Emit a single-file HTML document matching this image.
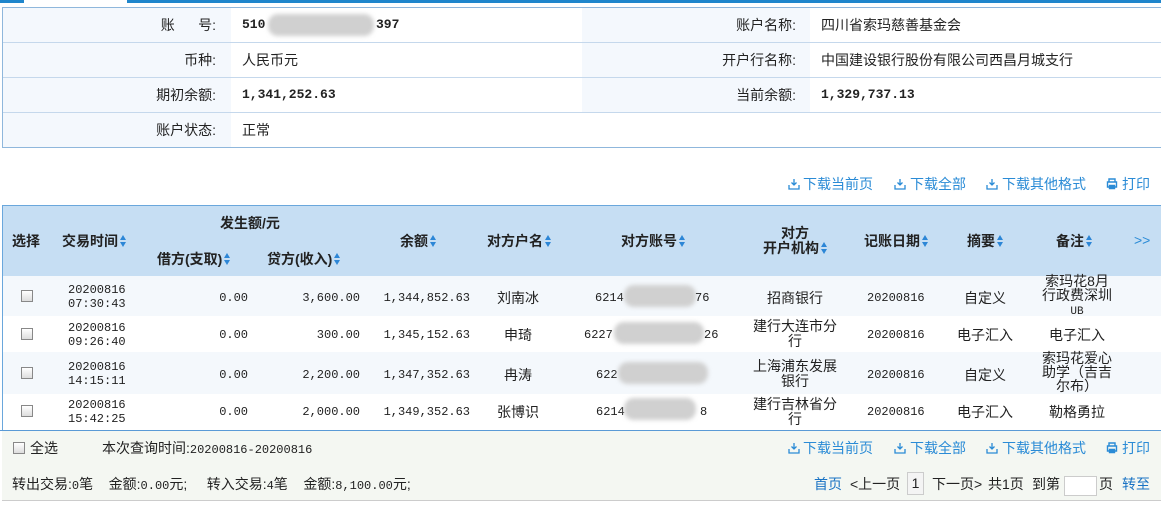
<!DOCTYPE html>
<html><head><meta charset="utf-8"><style>
*{margin:0;padding:0;box-sizing:border-box}
body{width:1161px;height:505px;background:#fff;font-family:"Liberation Sans","Noto Sans CJK SC",sans-serif;font-size:14px;color:#222;position:relative;overflow:hidden}
.a{position:absolute;white-space:nowrap;line-height:16px}
.m{font-family:"Liberation Mono","Noto Sans CJK SC",monospace;font-size:12px}
.b{font-weight:bold}
.blue{color:#1a73c4}
.lb{color:#2a8bd6}
.c{text-align:center}
.r{text-align:right}
.si{display:inline-block;width:6px;height:12px;vertical-align:-1px;margin-left:2px;position:relative}
.si:before{content:"";position:absolute;left:0;top:0;border-left:3px solid transparent;border-right:3px solid transparent;border-bottom:5px solid #2c86d6}
.si:after{content:"";position:absolute;left:0;top:7px;border-left:3px solid transparent;border-right:3px solid transparent;border-top:5px solid #2c86d6}
.cb{position:absolute;width:12px;height:12px;border:1px solid #888;background:linear-gradient(#fff,#ddd)}
.blur{position:absolute;height:22px;background:#d0d0d0;border-radius:10px;filter:blur(2px)}
svg{position:absolute}
</style></head><body>
<div class="a" style="left:0;top:0;width:24px;height:3px;background:#1f86cc"></div>
<div class="a" style="left:127px;top:0;width:1034px;height:3px;background:#1f86cc"></div>

<div class="a" style="left:2px;top:7px;width:1159px;height:141px;border:1px solid #8fb7dc;border-right:none"></div>
<div class="a" style="left:3px;top:8px;width:228px;height:139px;background:#f4f8fd"></div>
<div class="a" style="left:582px;top:8px;width:228px;height:104px;background:#f4f8fd"></div>
<div class="a" style="left:3px;top:42px;width:1158px;height:1px;background:#c5d8ec"></div>
<div class="a" style="left:3px;top:77px;width:1158px;height:1px;background:#c5d8ec"></div>
<div class="a" style="left:3px;top:112px;width:1158px;height:1px;background:#c5d8ec"></div>
<div class="a r" style="left:90px;width:126px;top:17px">账&nbsp;&nbsp;&nbsp;&nbsp;&nbsp;&nbsp;号:</div>
<div class="a m b" style="left:242px;top:17px;font-size:13px">510</div>
<div class="blur" style="left:268px;top:14px;width:106px"></div>
<div class="a m b" style="left:376px;top:17px;font-size:13px">397</div>
<div class="a r" style="left:90px;width:126px;top:52px">币种:</div>
<div class="a" style="left:242px;top:52px">人民币元</div>
<div class="a r" style="left:90px;width:126px;top:87px">期初余额:</div>
<div class="a m b" style="left:242px;top:87px;font-size:13px">1,341,252.63</div>
<div class="a r" style="left:90px;width:126px;top:122px">账户状态:</div>
<div class="a" style="left:242px;top:122px">正常</div>
<div class="a r" style="left:670px;width:126px;top:17px">账户名称:</div>
<div class="a" style="left:821px;top:17px">四川省索玛慈善基金会</div>
<div class="a r" style="left:670px;width:126px;top:52px">开户行名称:</div>
<div class="a" style="left:821px;top:52px">中国建设银行股份有限公司西昌月城支行</div>
<div class="a r" style="left:670px;width:126px;top:87px">当前余额:</div>
<div class="a m b" style="left:821px;top:87px;font-size:13px">1,329,737.13</div>

<svg style="left:788px;top:178px" width="12" height="12" viewBox="0 0 12 12" fill="none" stroke="#2a8bd6" stroke-width="1.3"><path d="M6 1v6M3.5 4.5L6 7l2.5-2.5M1 7v4h10V7"/></svg>
<div class="a lb" style="left:803px;top:176px">下载当前页</div>
<svg style="left:894px;top:178px" width="12" height="12" viewBox="0 0 12 12" fill="none" stroke="#2a8bd6" stroke-width="1.3"><path d="M6 1v6M3.5 4.5L6 7l2.5-2.5M1 7v4h10V7"/></svg>
<div class="a lb" style="left:910px;top:176px">下载全部</div>
<svg style="left:986px;top:178px" width="12" height="12" viewBox="0 0 12 12" fill="none" stroke="#2a8bd6" stroke-width="1.3"><path d="M6 1v6M3.5 4.5L6 7l2.5-2.5M1 7v4h10V7"/></svg>
<div class="a lb" style="left:1002px;top:176px">下载其他格式</div>
<svg style="left:1106px;top:178px" width="12" height="12" viewBox="0 0 12 12" fill="none" stroke="#2a8bd6" stroke-width="1.4"><path d="M3 4V1h6v3M1.5 4h9v5h-9zM3.5 7.5h5v3h-5z"/></svg>
<div class="a lb" style="left:1122px;top:176px">打印</div>

<div class="a" style="left:2px;top:205px;width:1159px;height:226px;border-left:1px solid #6aa7dc;border-top:1px solid #6aa7dc"></div>
<div class="a" style="left:3px;top:206px;width:1158px;height:70px;background:#c6def3"></div>
<div class="a" style="left:3px;top:276px;width:1158px;height:40px;background:#f4f8fc"></div>
<div class="a" style="left:3px;top:352px;width:1158px;height:42px;background:#f4f8fc"></div>
<div class="a" style="left:0;top:430px;width:1161px;height:1px;background:#5a9ad6"></div>
<div class="a" style="left:2px;top:431px;width:1159px;height:70px;background:#f4f7f2"></div>
<div class="a" style="left:2px;top:500px;width:1159px;height:1px;background:#ccc"></div>

<div class="a b" style="left:12px;top:233px">选择</div>
<div class="a b" style="left:62px;top:233px">交易时间<span class="si"></span></div>
<div class="a b" style="left:220px;top:215px">发生额/元</div>
<div class="a b" style="left:157px;top:251px">借方(支取)<span class="si"></span></div>
<div class="a b" style="left:267px;top:251px">贷方(收入)<span class="si"></span></div>
<div class="a b" style="left:400px;top:233px">余额<span class="si"></span></div>
<div class="a b" style="left:487px;top:233px">对方户名<span class="si"></span></div>
<div class="a b" style="left:621px;top:233px">对方账号<span class="si"></span></div>
<div class="a b c" style="left:755px;top:226px;width:80px;line-height:15px">对方<br>开户机构<span class="si"></span></div>
<div class="a b" style="left:864px;top:233px">记账日期<span class="si"></span></div>
<div class="a b" style="left:967px;top:233px">摘要<span class="si"></span></div>
<div class="a b" style="left:1056px;top:233px">备注<span class="si"></span></div>
<div class="a lb" style="left:1134px;top:232px">&gt;&gt;</div>

<div class="cb" style="left:21px;top:290px"></div>
<div class="cb" style="left:21px;top:328px"></div>
<div class="cb" style="left:21px;top:367px"></div>
<div class="cb" style="left:21px;top:405px"></div>

<div class="a m" style="left:68px;top:283px;line-height:14px">20200816<br>07:30:43</div>
<div class="a m" style="left:68px;top:321px;line-height:14px">20200816<br>09:26:40</div>
<div class="a m" style="left:68px;top:360px;line-height:14px">20200816<br>14:15:11</div>
<div class="a m" style="left:68px;top:398px;line-height:14px">20200816<br>15:42:25</div>

<div class="a m r" style="left:180px;width:68px;top:290px">0.00</div>
<div class="a m r" style="left:180px;width:68px;top:327px">0.00</div>
<div class="a m r" style="left:180px;width:68px;top:367px">0.00</div>
<div class="a m r" style="left:180px;width:68px;top:404px">0.00</div>
<div class="a m r" style="left:270px;width:90px;top:290px">3,600.00</div>
<div class="a m r" style="left:270px;width:90px;top:327px">300.00</div>
<div class="a m r" style="left:270px;width:90px;top:367px">2,200.00</div>
<div class="a m r" style="left:270px;width:90px;top:404px">2,000.00</div>
<div class="a m r" style="left:370px;width:100px;top:290px">1,344,852.63</div>
<div class="a m r" style="left:370px;width:100px;top:327px">1,345,152.63</div>
<div class="a m r" style="left:370px;width:100px;top:367px">1,347,352.63</div>
<div class="a m r" style="left:370px;width:100px;top:404px">1,349,352.63</div>

<div class="a c" style="left:480px;width:76px;top:290px">刘南冰</div>
<div class="a c" style="left:480px;width:76px;top:327px">申琦</div>
<div class="a c" style="left:480px;width:76px;top:367px">冉涛</div>
<div class="a c" style="left:480px;width:76px;top:404px">张博识</div>

<div class="a m" style="left:595px;top:290px">6214</div><div class="blur" style="left:624px;top:285px;width:72px"></div><div class="a m" style="left:695px;top:290px">76</div>
<div class="a m" style="left:584px;top:327px">6227</div><div class="blur" style="left:614px;top:322px;width:90px"></div><div class="a m" style="left:704px;top:327px">26</div>
<div class="a m" style="left:596px;top:367px">622</div><div class="blur" style="left:618px;top:362px;width:90px"></div>
<div class="a m" style="left:596px;top:404px">6214</div><div class="blur" style="left:624px;top:398px;width:72px"></div><div class="a m" style="left:700px;top:404px">8</div>

<div class="a c" style="left:752px;width:86px;top:290px">招商银行</div>
<div class="a c" style="left:752px;width:86px;top:319px;line-height:15px;white-space:normal">建行大连市分行</div>
<div class="a c" style="left:752px;width:86px;top:359px;line-height:15px;white-space:normal">上海浦东发展银行</div>
<div class="a c" style="left:752px;width:86px;top:397px;line-height:15px;white-space:normal">建行吉林省分行</div>

<div class="a m" style="left:867px;top:290px">20200816</div>
<div class="a m" style="left:867px;top:327px">20200816</div>
<div class="a m" style="left:867px;top:367px">20200816</div>
<div class="a m" style="left:867px;top:404px">20200816</div>

<div class="a c" style="left:950px;width:70px;top:290px">自定义</div>
<div class="a c" style="left:950px;width:70px;top:327px">电子汇入</div>
<div class="a c" style="left:950px;width:70px;top:367px">自定义</div>
<div class="a c" style="left:950px;width:70px;top:404px">电子汇入</div>

<div class="a c" style="left:1040px;width:74px;top:274px;line-height:14px;white-space:normal">索玛花8月行政费深圳<span class="m" style="font-size:11px">UB</span></div>
<div class="a c" style="left:1037px;width:80px;top:327px">电子汇入</div>
<div class="a c" style="left:1040px;width:74px;top:351px;line-height:14px;white-space:normal">索玛花爱心助学（吉吉尔布）</div>
<div class="a c" style="left:1037px;width:80px;top:404px">勒格勇拉</div>

<div class="cb" style="left:13px;top:442px"></div>
<div class="a" style="left:30px;top:440px">全选</div>
<div class="a" style="left:102px;top:440px">本次查询时间:<span class="m">20200816-20200816</span></div>
<svg style="left:788px;top:442px" width="12" height="12" viewBox="0 0 12 12" fill="none" stroke="#2a8bd6" stroke-width="1.3"><path d="M6 1v6M3.5 4.5L6 7l2.5-2.5M1 7v4h10V7"/></svg>
<div class="a lb" style="left:803px;top:440px">下载当前页</div>
<svg style="left:894px;top:442px" width="12" height="12" viewBox="0 0 12 12" fill="none" stroke="#2a8bd6" stroke-width="1.3"><path d="M6 1v6M3.5 4.5L6 7l2.5-2.5M1 7v4h10V7"/></svg>
<div class="a lb" style="left:910px;top:440px">下载全部</div>
<svg style="left:986px;top:442px" width="12" height="12" viewBox="0 0 12 12" fill="none" stroke="#2a8bd6" stroke-width="1.3"><path d="M6 1v6M3.5 4.5L6 7l2.5-2.5M1 7v4h10V7"/></svg>
<div class="a lb" style="left:1002px;top:440px">下载其他格式</div>
<svg style="left:1106px;top:442px" width="12" height="12" viewBox="0 0 12 12" fill="none" stroke="#2a8bd6" stroke-width="1.4"><path d="M3 4V1h6v3M1.5 4h9v5h-9zM3.5 7.5h5v3h-5z"/></svg>
<div class="a lb" style="left:1122px;top:440px">打印</div>

<div class="a" style="left:12px;top:476px">转出交易:<span class="m">0</span>笔&nbsp;&nbsp;&nbsp;&nbsp;金额:<span class="m">0.00</span>元;&nbsp;&nbsp;&nbsp;&nbsp;&nbsp;转入交易:<span class="m">4</span>笔&nbsp;&nbsp;&nbsp;&nbsp;金额:<span class="m">8,100.00</span>元;</div>
<div class="a blue" style="left:814px;top:476px">首页</div>
<div class="a" style="left:850px;top:476px">&lt;上一页</div>
<div class="a c" style="left:907px;top:472px;width:17px;height:23px;border:1px solid #ccc;background:#f4f4f4;line-height:21px">1</div>
<div class="a" style="left:932px;top:476px">下一页&gt;</div>
<div class="a" style="left:988px;top:476px">共1页</div>
<div class="a" style="left:1032px;top:476px">到第</div>
<div class="a" style="left:1064px;top:476px;width:33px;height:20px;border:1px solid #ccc;background:#fff"></div>
<div class="a" style="left:1099px;top:476px">页</div>
<div class="a blue" style="left:1122px;top:476px">转至</div>
</body></html>
